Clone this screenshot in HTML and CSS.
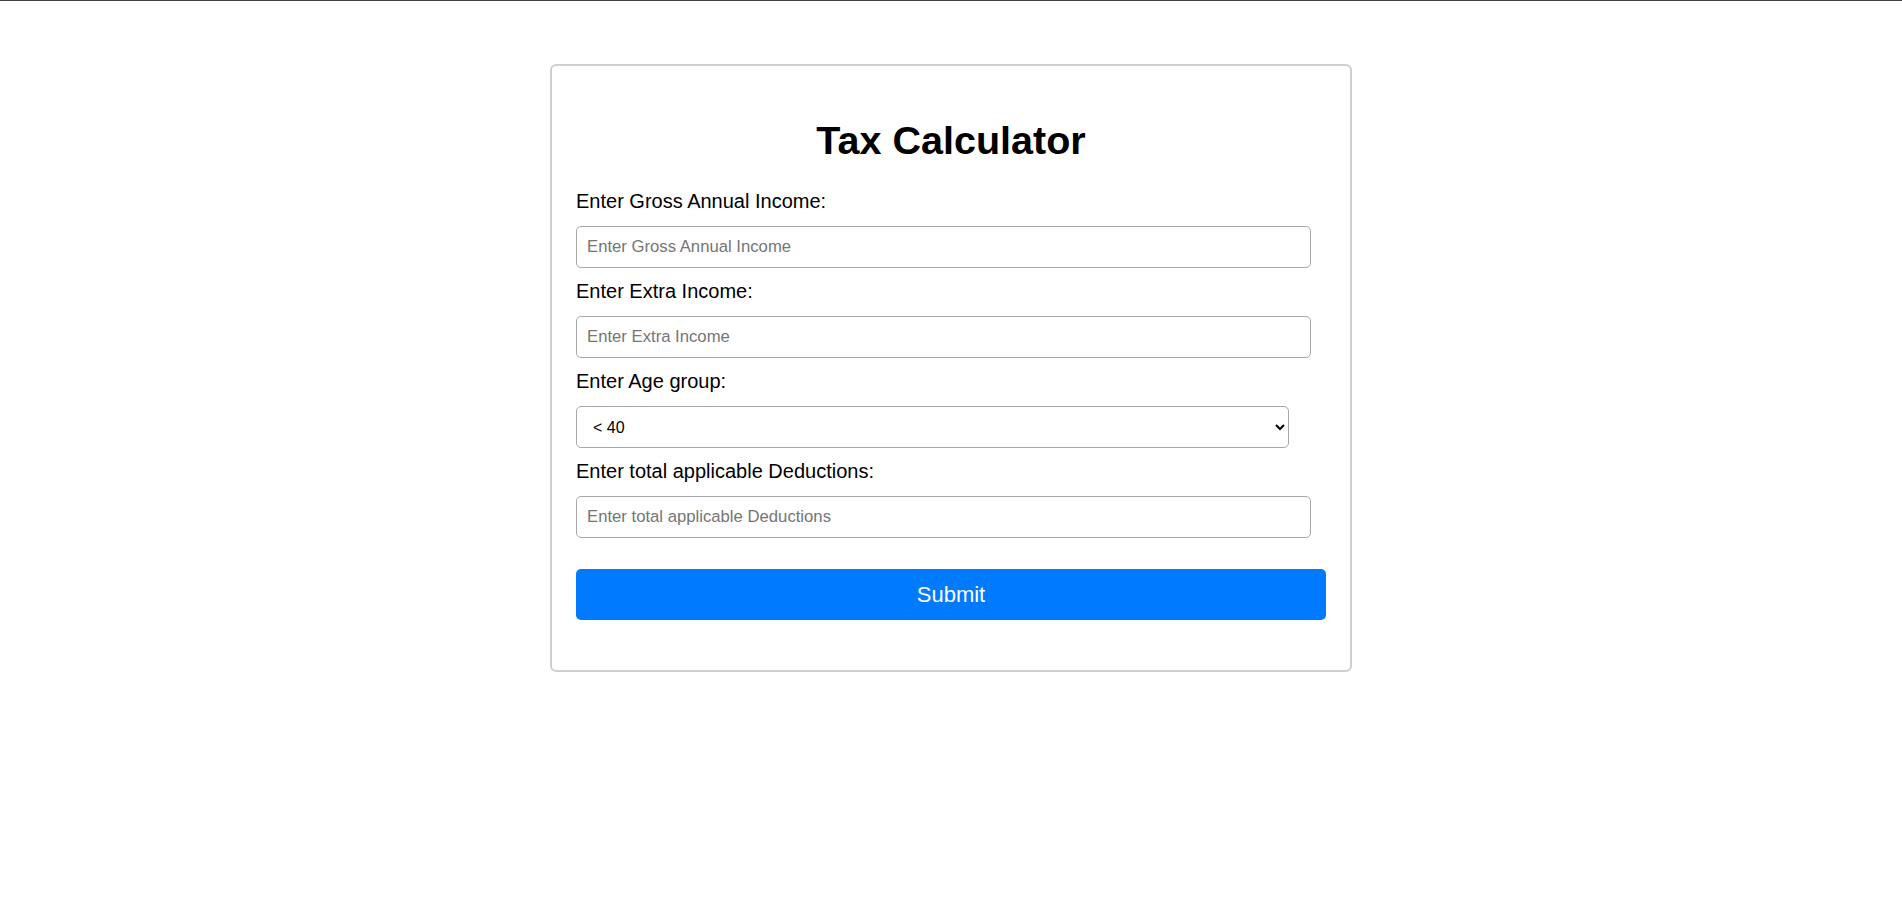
FILE: index.html
```html
<!DOCTYPE html>
<html lang="en">
<head>
<meta charset="utf-8">
<title>Tax Calculator</title>
<link rel="stylesheet" href="styles.css">
</head>
<body>
<div class="frame-top"></div>
<main class="card">
  <h1 class="title">Tax Calculator</h1>
  <form class="form">
    <label class="field-label" for="gross">Enter Gross Annual Income:</label>
    <input class="field-input" id="gross" type="text" placeholder="Enter Gross Annual Income">
    <label class="field-label" for="extra">Enter Extra Income:</label>
    <input class="field-input" id="extra" type="text" placeholder="Enter Extra Income">
    <label class="field-label" for="age">Enter Age group:</label>
    <select class="field-select" id="age">
      <option>&lt; 40</option>
      <option>&ge; 40 &amp; &lt; 60</option>
      <option>&ge; 60</option>
    </select>
    <label class="field-label" for="deductions">Enter total applicable Deductions:</label>
    <input class="field-input" id="deductions" type="text" placeholder="Enter total applicable Deductions">
    <button class="submit-btn" type="button">Submit</button>
  </form>
</main>
</body>
</html>
```
FILE: styles.css
```css
html, body {
  margin: 0;
  padding: 0;
  background: #ffffff;
}

body {
  font-family: "Liberation Sans", Arial, sans-serif;
  color: #000000;
}

.frame-top {
  height: 1px;
  background: #3f3f3f;
}

.card {
  width: 750px;
  margin: 63px auto 0;
  padding: 24px;
  border: 2px solid #cfcfcf;
  border-radius: 6px;
}

.title {
  margin: 28px 0 28px;
  font-size: 39.5px;
  font-weight: bold;
  text-align: center;
  line-height: 44px;
}

.form {
  display: block;
  margin: 0;
}

.field-label {
  display: block;
  font-size: 20px;
  line-height: 22px;
  margin-bottom: 14px;
}

.field-input,
.field-select {
  display: block;
  box-sizing: border-box;
  height: 42px;
  margin: 0 0 12px;
  border: 1px solid #a8a8a8;
  border-radius: 5px;
  font-family: "Liberation Sans", Arial, sans-serif;
  font-size: 16.7px;
  color: #000000;
  background: #ffffff;
}

.field-input {
  width: 98%;
  padding: 0 10px;
}

.field-input::placeholder {
  color: #757575;
}

.field-select {
  width: 95%;
  padding: 0 12px;
  font-size: 16px;
}

.submit-btn {
  display: block;
  width: 100%;
  height: 51px;
  margin: 31px 0 26px;
  border: none;
  border-radius: 5px;
  background: #007bff;
  color: #ffffff;
  font-family: "Liberation Sans", Arial, sans-serif;
  font-size: 22px;
  cursor: pointer;
}
```
